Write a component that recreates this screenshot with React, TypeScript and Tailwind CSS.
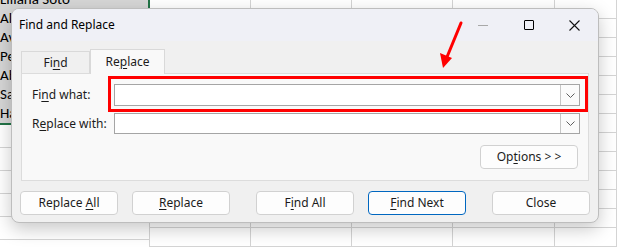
import React from 'react';

const ui = { fontFamily: '"Segoe UI", "Noto Sans", "Open Sans", sans-serif' };
const cellFont = { fontFamily: 'Carlito, "Liberation Sans", "Noto Sans", sans-serif' };

const names = ['Liliana Soto', 'Allison Reed', 'Ava Mills', 'Peter Lang', 'Abby Cole', 'Sam Ortiz', 'Hannah Diaz'];

const Key = ({ children }: { children: React.ReactNode }) => <span className="underline underline-offset-2">{children}</span>;

const Chevron = () => (
  <svg width="9" height="5" viewBox="0 0 9 5" fill="none">
    <path d="M0.5 0.5 L4.5 4.5 L8.5 0.5" stroke="#5f5f5f" strokeWidth="1" />
  </svg>
);

const Combo = ({ h }: { h: string }) => (
  <div className={`flex ${h} w-[466px] border border-[#a5a5a5] bg-white`}>
    <div className="flex-1" />
    <div className="flex w-[19px] items-center justify-center border-l border-[#c6c6c6] bg-[#fbfbfb]">
      <Chevron />
    </div>
  </div>
);

const Btn = ({ children, primary = false, className = '' }: { children: React.ReactNode; primary?: boolean; className?: string }) => (
  <div
    className={`flex h-[24px] w-[98px] items-center justify-center rounded-[4px] border bg-[#fdfdfd] text-[12px] text-[#1b1b1b] ${
      primary ? 'border-[#0067c0]' : 'border-[#d1d1d1]'
    } ${className}`}
  >
    <span className="whitespace-pre">{children}</span>
  </div>
);

function Sheet() {
  return (
    <div className="flex h-[247px] w-[617px] overflow-hidden bg-white">
      {/* selected name column */}
      <div className="flex w-[150px] shrink-0 flex-col border-r border-[#d4d4d4]">
        <div className="-mr-px -mt-[10px] flex flex-col border-b-2 border-r-2 border-[#217346] bg-[#d6d6d6]" style={cellFont}>
          {names.map((n) => (
            <div key={n} className="flex h-[19px] items-center whitespace-nowrap text-[15px] leading-none text-black">
              {n}
            </div>
          ))}
        </div>
        {[0, 1, 2, 3, 4, 5].map((i) => (
          <div key={i} className="h-[23px] shrink-0 border-b border-[#d4d4d4]" />
        ))}
      </div>
      {/* empty columns */}
      {[101, 101, 101, 102, 62].map((w, c) => (
        <div key={c} className="flex shrink-0 flex-col border-r border-[#d4d4d4]" style={{ width: w }}>
          {Array.from({ length: 14 }).map((_, r) => (
            <div key={r} className="h-[19px] shrink-0 border-b border-[#d4d4d4]" />
          ))}
        </div>
      ))}
    </div>
  );
}

function Dialog() {
  return (
    <div
      className="absolute left-[11px] top-[8px] flex h-[215px] w-[588px] flex-col overflow-hidden rounded-[8px] border border-[#bdbdbd] bg-[#f0f0f0] shadow-[0_6px_18px_rgba(0,0,0,0.22)]"
      style={ui}
    >
      {/* title bar */}
      <div className="flex h-[32px] shrink-0 items-center bg-[#eff0f6] pl-[7px] text-[12px] text-black">
        <span className="flex-1">Find and Replace</span>
        <div className="flex h-full items-center">
          <div className="flex w-[46px] justify-center">
            <div className="h-px w-[10px] bg-[#a8a8a8]" />
          </div>
          <div className="flex w-[46px] justify-center">
            <div className="h-[10px] w-[10px] rounded-[1px] border border-black" />
          </div>
          <div className="flex w-[46px] justify-center pr-[2px]">
            <svg width="11" height="11" viewBox="0 0 11 11">
              <path d="M0.5 0.5 L10.5 10.5 M10.5 0.5 L0.5 10.5" stroke="#111" strokeWidth="1.1" />
            </svg>
          </div>
        </div>
      </div>

      {/* body */}
      <div className="flex flex-1 flex-col px-[8px] pt-[8px]">
        {/* tabs */}
        <div className="ml-[1px] flex h-[24px] items-end text-[12px] text-[#1b1b1b]">
          <div className="flex h-[22px] w-[69px] items-center justify-center border border-b-0 border-[#d9d9d9] bg-[#f0f0f0]">
            <span>
              Fi<Key>n</Key>d
            </span>
          </div>
          <div className="relative z-10 -mb-px flex h-[25px] w-[75px] items-center justify-center border border-b-0 border-[#d9d9d9] bg-[#f9f9f9]">
            <span>
              Re<Key>p</Key>lace
            </span>
          </div>
        </div>

        {/* panel */}
        <div className="ml-[1px] flex h-[108px] w-[568px] flex-col border border-[#dcdcdc] bg-[#f9f9f9] pl-[10px] pr-[8px] pt-[10px] text-[12px] text-[#1b1b1b]">
          <div className="flex items-center">
            <span className="w-[82px]">
              Fi<Key>n</Key>d what:
            </span>
            <Combo h="h-[22px]" />
          </div>
          <div className="mt-[7px] flex items-center">
            <span className="w-[82px]">
              R<Key>e</Key>place with:
            </span>
            <Combo h="h-[21px]" />
          </div>
          <div className="mt-[11px] flex justify-end pr-[2px]">
            <Btn>
              Op<Key>t</Key>ions &gt; &gt;
            </Btn>
          </div>
        </div>

        {/* buttons */}
        <div className="mt-[10px] flex">
          <Btn>
            Replace <Key>A</Key>ll
          </Btn>
          <Btn className="ml-[14px]">
            <Key>R</Key>eplace
          </Btn>
          <Btn className="ml-[26px]">
            F<Key>i</Key>nd All
          </Btn>
          <Btn primary className="ml-[14px]">
            <Key>F</Key>ind Next
          </Btn>
          <Btn className="ml-[26px]">Close</Btn>
        </div>
      </div>
    </div>
  );
}

export default function App() {
  return (
    <div className="relative h-[247px] w-[617px] overflow-hidden">
      <Sheet />
      <Dialog />
      {/* annotation: red box and arrow */}
      <div className="absolute left-[108px] top-[76px] h-[36px] w-[480px] border-[3px] border-[#ff0000]" />
      <svg className="absolute left-0 top-0" width="617" height="247" viewBox="0 0 617 247">
        <line x1="461" y1="23" x2="447" y2="57" stroke="#ff0000" strokeWidth="3" strokeLinecap="round" />
        <polygon points="443,68 440,53 452,58" fill="#ff0000" />
      </svg>
    </div>
  );
}
